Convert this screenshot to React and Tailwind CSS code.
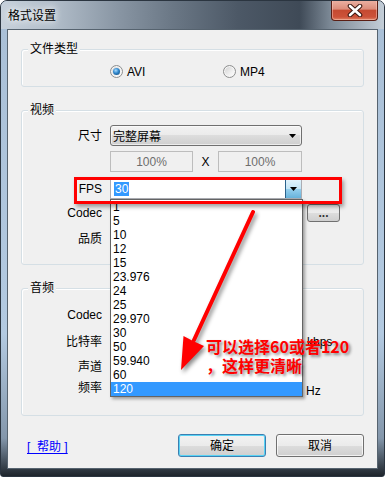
import React from "react";

function Radio({ checked, label, className }) {
  return (
    <div className={"flex items-center " + (className || "")}>
      <div className="w-[13px] h-[13px] shrink-0 rounded-full border border-[#8e8f8f] bg-[linear-gradient(135deg,#cfcfcf_0%,#f0f0f0_60%,#ffffff_100%)] shadow-[inset_0_0_0_1px_#f6f6f6] flex items-center justify-center">
        {checked && (
          <div className="w-[7px] h-[7px] rounded-full bg-[radial-gradient(circle_at_40%_35%,#a8dcff_0%,#2f86cc_45%,#12446f_100%)]" />
        )}
      </div>
      <span className="ml-[4px] leading-[14px]">{label}</span>
    </div>
  );
}

function Group({ title, className, children }) {
  return (
    <div className={"relative rounded-[3px] border border-[#d5dfe5] shadow-[inset_1px_1px_0_#ffffff] flex flex-col " + (className || "")}>
      <span className="absolute left-[6px] top-[-9px] px-[2px] bg-[#f0f0f0] leading-[16px]">{title}</span>
      {children}
    </div>
  );
}

function Row({ label, className, children }) {
  return (
    <div className={"flex items-center " + (className || "")}>
      <div className="w-[80px] text-right leading-[14px]">{label}</div>
      <div className="ml-[8px] flex items-center">{children}</div>
    </div>
  );
}

const btnBase =
  "h-[23px] w-[88px] rounded-[3px] border flex items-center justify-center leading-[14px] bg-[linear-gradient(180deg,#f2f2f2_0%,#ebebeb_50%,#dddddd_50%,#cfcfcf_100%)]";

export default function App() {
  const fps = ["1", "5", "10", "12", "15", "23.976", "24", "25", "29.970", "30", "50", "59.940", "60", "120"];
  return (
    <div className="relative w-[385px] h-[477px] overflow-hidden font-['Liberation_Sans','Noto_Sans_CJK_SC',sans-serif] text-[12px] text-black">
      <div className="flex flex-col w-full h-full rounded-t-[7px] rounded-b-[3px] border border-[#2b3540] overflow-hidden bg-[linear-gradient(180deg,#a9bfd6_0%,#b3cae1_70%,#8497ab_92%,#1e252c_100%)]">
        {/* title bar */}
        <div className="flex items-start h-[28px] shrink-0 bg-[linear-gradient(90deg,#c7d1db_0%,#b1bdc9_14%,#8a97a5_30%,#6a7785_45%,#4c5866_62%,#3f4a57_78%,#7c8996_86%,#c4ced8_100%)]">
          <span className="ml-[7px] mt-[7px] leading-[14px] font-['Noto_Sans_CJK_SC',sans-serif] [text-shadow:0_0_6px_rgba(255,255,255,0.95),0_0_10px_rgba(255,255,255,0.8)]">
            格式设置
          </span>
          <div className="ml-auto -mt-px mr-[6px] w-[47px] h-[21px] rounded-b-[4px] border border-t-0 border-[#5a1e14] bg-[linear-gradient(180deg,#ecb3a5_0%,#dc8d7b_45%,#c54a31_52%,#cc5239_85%,#e08467_100%)] shadow-[inset_0_0_0_1px_rgba(255,210,200,0.45)] flex items-center justify-center">
            <svg width="16" height="13" viewBox="0 0 16 13">
              <path d="M3 2 L13 11 M13 2 L3 11" stroke="#3b1710" strokeWidth="4.6" strokeLinecap="round" />
              <path d="M3 2 L13 11 M13 2 L3 11" stroke="#ffffff" strokeWidth="2.6" strokeLinecap="round" />
            </svg>
          </div>
        </div>

        {/* client area */}
        <div className="mx-[6px] h-[440px] shrink-0 border border-[#56636f] bg-[#f0f0f0] flex flex-col px-[13px]">
          {/* 文件类型 */}
          <Group title="文件类型" className="mt-[19px] h-[38px]">
            <div className="mt-[15px] h-[13px] pl-[88px] flex items-center">
              <Radio checked label="AVI" className="w-[113px]" />
              <Radio label="MP4" />
            </div>
          </Group>

          {/* 视频 */}
          <Group title="视频" className="mt-[23px] h-[155px]">
            <Row label="尺寸" className="mt-[14px] h-[21px]">
              <div className="w-[192px] h-[21px] rounded-[3px] border border-[#707070] bg-[linear-gradient(180deg,#f2f2f2_0%,#ebebeb_50%,#dddddd_50%,#cfcfcf_100%)] shadow-[inset_0_0_0_1px_rgba(255,255,255,0.6)] flex items-center">
                <span className="ml-[2px] leading-[14px] font-['Noto_Sans_CJK_SC',sans-serif]">完整屏幕</span>
                <svg className="ml-auto mr-[5px]" width="7" height="4" viewBox="0 0 7 4">
                  <path d="M0 0 H7 L3.5 4 Z" fill="#000" />
                </svg>
              </div>
            </Row>
            <Row label="" className="mt-[5px] h-[21px]">
              <div className="w-[83px] h-[21px] border border-[#bdbdbd] bg-[#f0f0f0] flex items-center justify-center text-[#6d6d6d]">100%</div>
              <div className="w-[25px] text-center">X</div>
              <div className="w-[84px] h-[21px] border border-[#bdbdbd] bg-[#f0f0f0] flex items-center justify-center text-[#6d6d6d]">100%</div>
            </Row>
            <Row label="FPS" className="mt-[6px] h-[21px]">
              <div className="w-[192px] h-[21px] border border-[#abadb3] bg-white flex items-stretch">
                <span className="ml-[3px] self-center px-[1px] leading-[14px] bg-[#3399ff] text-white">30</span>
                <div className="ml-auto w-[16px] border-l border-[#2c628b] bg-[linear-gradient(180deg,#e5f4fc_0%,#c4e5f6_50%,#98d1ef_50%,#68b3db_100%)] flex items-center justify-center">
                  <svg width="7" height="4" viewBox="0 0 7 4">
                    <path d="M0 0 H7 L3.5 4 Z" fill="#000" />
                  </svg>
                </div>
              </div>
            </Row>
            <Row label="Codec" className="mt-[5px] h-[18px]">
              <div className="w-[192px]" />
              <div className="ml-[5px] w-[33px] h-[18px] rounded-[3px] border border-[#707070] bg-[linear-gradient(180deg,#f2f2f2_0%,#ebebeb_50%,#dddddd_50%,#cfcfcf_100%)] flex items-center justify-center leading-[10px] font-bold text-[#333]">
                ...
              </div>
            </Row>
            <Row label="品质" className="mt-[8px] h-[18px]">
              <div className="w-[192px]" />
            </Row>
          </Group>

          {/* 音频 */}
          <Group title="音频" className="mt-[23px] h-[128px]">
            <Row label="Codec" className="mt-[16px] h-[20px]">
              <div className="w-[192px]" />
            </Row>
            <Row label="比特率" className="mt-[7px] h-[20px]">
              <div className="w-[192px]" />
              <span className="ml-[5px] leading-[14px]">kbps</span>
            </Row>
            <Row label="声道" className="mt-[5px] h-[20px]">
              <div className="w-[192px]" />
            </Row>
            <Row label="频率" className="mt-[1px] h-[20px]">
              <div className="w-[192px]" />
              <span className="ml-[4px] mt-[5px] leading-[14px]">Hz</span>
            </Row>
          </Group>

          {/* bottom buttons */}
          <div className="mt-[18px] h-[23px] flex items-center">
            <span className="ml-[6px] mt-[3px] leading-[14px] text-[#0000ff] underline underline-offset-[2px]">[&nbsp;&nbsp;帮助&nbsp;]</span>
            <div className={btnBase + " ml-auto border-[#3c7fb1] shadow-[inset_0_0_0_1px_#58d3f5]"}>确定</div>
            <div className={btnBase + " ml-[10px] border-[#707070] shadow-[inset_0_0_0_1px_rgba(255,255,255,0.7)]"}>取消</div>
          </div>
        </div>
      </div>

      {/* dropdown list */}
      <div className="absolute left-[110px] top-[199px] w-[193px] h-[198px] border border-[#646464] bg-white shadow-[2px_2px_3px_rgba(0,0,0,0.35)] flex flex-col">
        {fps.map((v) => (
          <div
            key={v}
            className={
              v === "120"
                ? "h-[14px] leading-[14px] pl-[2px] bg-[#3399ff] text-white"
                : "h-[14px] leading-[14px] pl-[2px]"
            }
          >
            {v}
          </div>
        ))}
      </div>

      {/* red highlight rectangle */}
      <div className="absolute left-[74px] top-[177px] w-[268px] h-[27px] border-[3px] border-[#ff0000] shadow-[2px_3px_4px_rgba(0,0,0,0.35)]" />

      {/* arrow */}
      <svg className="absolute left-0 top-0 drop-shadow-[2px_3px_2px_rgba(0,0,0,0.45)]" width="385" height="477" viewBox="0 0 385 477">
        <path d="M253 212 L194 340" stroke="#ff0000" strokeWidth="4" strokeLinecap="round" />
        <path d="M181 370 L183.5 336 L193 341 L204 346 Z" fill="#ff0000" />
      </svg>

      {/* annotation */}
      <div className="absolute left-[206px] top-[337px] font-['Noto_Sans_CJK_SC',sans-serif] font-bold text-[16px] leading-[19px] text-[#ff0000] [text-shadow:2px_2px_3px_rgba(0,0,0,0.45)] whitespace-nowrap">
        <div>可以选择60或者120</div>
        <div>，这样更清晰</div>
      </div>
    </div>
  );
}
